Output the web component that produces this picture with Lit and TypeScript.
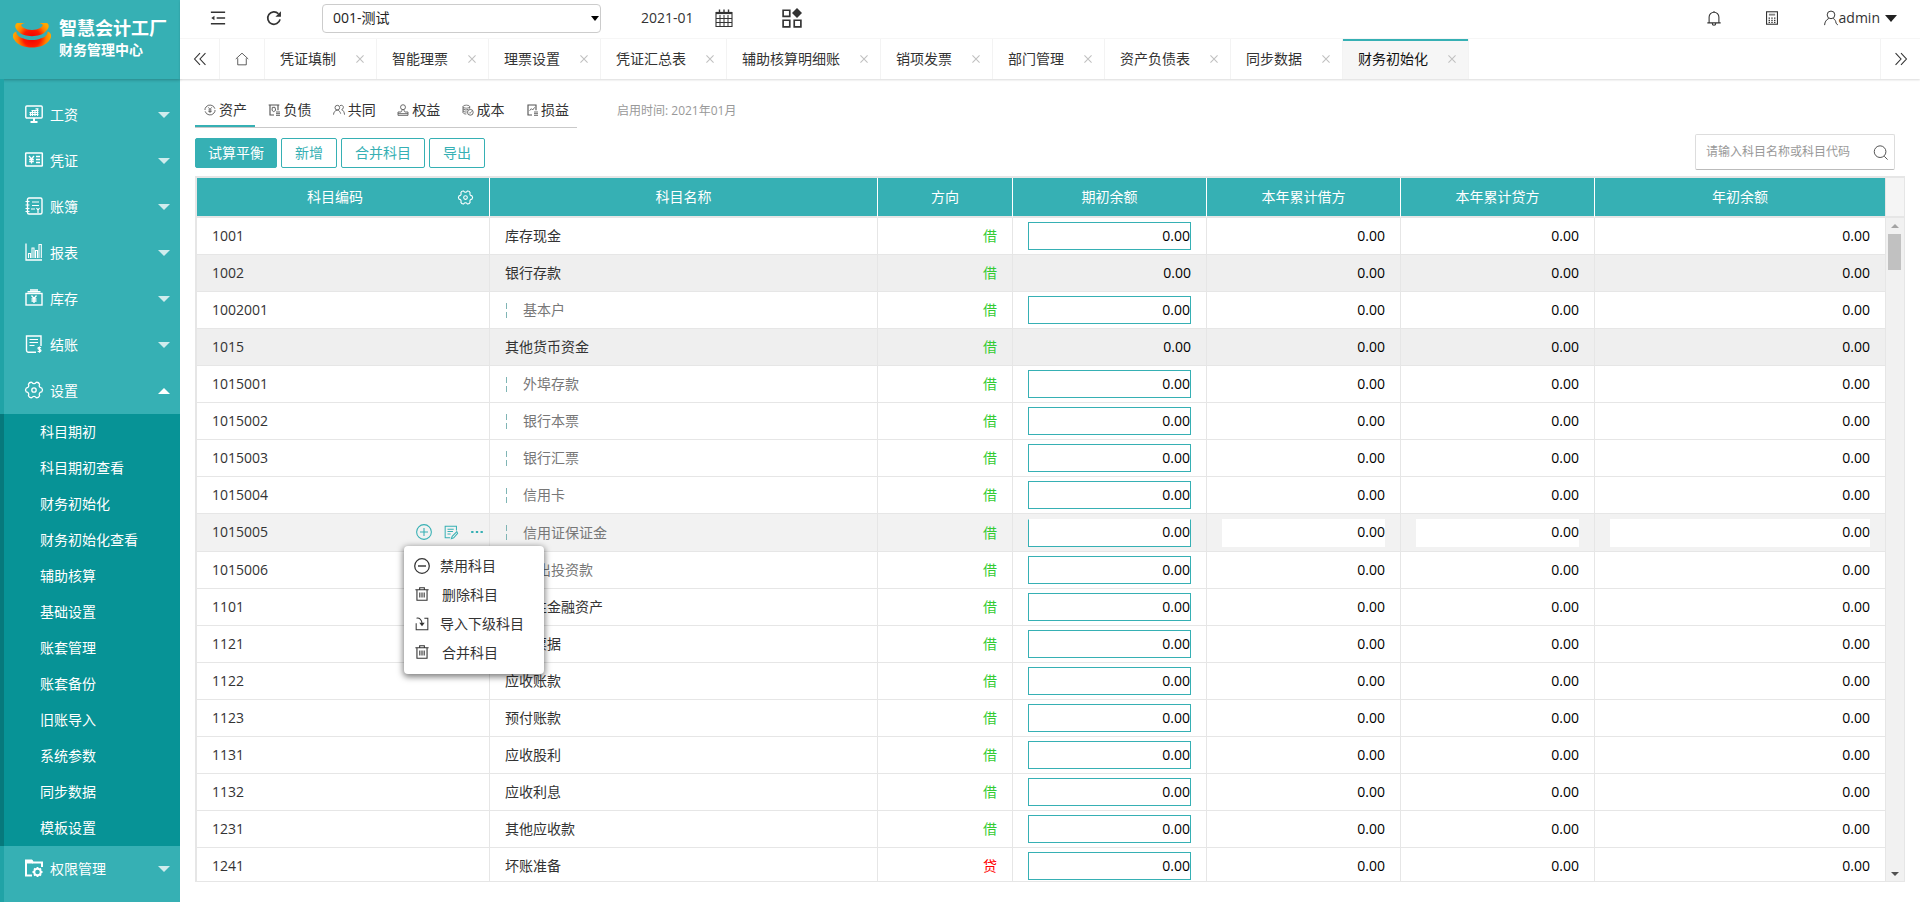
import { LitElement, html, css, svg, nothing, TemplateResult } from "lit";
import { customElement, property } from "lit/decorators.js";
import { classMap } from "lit/directives/class-map.js";

const FONT = css`"Open Sans", "Noto Sans CJK SC", sans-serif`;

/* Outline of a six-lobed cog centred on 9,9. */
function cogOutline(): string {
  const at = (deg: number, r: number) => {
    const a = (deg * Math.PI) / 180;
    return `${(9 + r * Math.cos(a)).toFixed(2)} ${(9 + r * Math.sin(a)).toFixed(2)}`;
  };
  let d = `M${at(-30, 6.4)}`;
  for (let a = 0; a < 360; a += 60) {
    d += `Q${at(a - 20, 6.4)} ${at(a - 14, 8)}Q${at(a, 9.3)} ${at(a + 14, 8)}Q${at(a + 20, 6.4)} ${at(a + 30, 6.4)}`;
  }
  return d + "z";
}

/* Line icons, all on an 18 x 18 grid. */
const ICONS: Record<string, TemplateResult> = {
  salary: svg`<rect x="0.800" y="1" width="16.400" height="12" rx="1" stroke-width="1.400"/><path d="M5.500 17h7M9 13v4" stroke-width="2"/><path d="M4.500 9.500h9M4.500 7.500h9M6.500 5.500h7M10.500 3.800h3M5.500 7v4M7.500 5v6M10 5v6M12.500 3.500v7.500" stroke-width="1.200"/>`,
  voucher: svg`<rect x="0.700" y="2" width="16.600" height="13" rx="0.500" stroke-width="1.500"/><path d="M4 5l2.500 3L9 5M6.500 8v4.500M4.200 8.500h4.600M4.200 10.500h4.600M11 5.500h4M11 8.500h4M11 11.500h4" stroke-width="1.300"/>`,
  book: svg`<rect x="2.500" y="1" width="14.500" height="16" rx="1.500" stroke-width="1.400"/><path d="M0.500 4.500h4M0.500 8h4M0.500 11.500h4M0.500 14.500h4M7 5h7M7 8.500h7M6 12h4M11.500 11l1.500 2 1.500-2M13 13v3" stroke-width="1.200"/>`,
  report: svg`<path d="M1 0.500v16.500h16" stroke-width="1.300"/><path d="M3.500 15V10.500h2V15M7 15V5h2V15M10.500 15V7.500h2V15M14 15V1.500h2.300V15" stroke-width="1.100"/>`,
  stock: svg`<rect x="1" y="4.500" width="16" height="11.500" stroke-width="1.400"/><path d="M2.500 2.700h13M5 1h8" stroke-width="1.500"/><path d="M6.500 6.500L9 9.500l2.500-3M9 9.500v4.500M6.500 10h5M6.500 12h5" stroke-width="1.300"/>`,
  closing: svg`<path d="M11 17.300H3.500a2 2 0 0 1-2-2V1h14.500v10" stroke-width="1.400"/><path d="M4.500 4.500h8.500M4.500 7.500h8.500M4.500 10.500h5M16 12.800c-1-.8-3.200-.6-3 .7s3 .6 3 2-2.500 1.500-3.300.5M14.500 11.500v6.300" stroke-width="1.200"/>`,
  gear: svg`<path d=${cogOutline()} stroke-width="1.300"/><circle cx="9" cy="9" r="2.200" stroke-width="1.300"/>`,
  rights: svg`<path d="M7 16.500H1V1.500h5.500l1.500 2h9V8" stroke-width="2"/><path d="M1 3h7" stroke-width="3"/><circle cx="12.500" cy="13" r="3.300" stroke-width="2"/><path d="M12.500 8v2M12.500 16v2M7.500 13h2M15.500 13h2M9 9.500l1.500 1.500M14.500 15l1.500 1.500M16 9.500l-1.500 1.500M10.500 15l-1.500 1.500" stroke-width="1.800"/>`,
  fold: svg`<path d="M1 2.500h16M7.500 9h9.500M1 15.500h16" stroke-width="1.600"/><path d="M1.500 9l3.500-2.500v5z" fill="currentColor" stroke="none"/>`,
  refresh: svg`<path d="M15.800 10.500a7 7 0 1 1-1.800-6.300" stroke-width="1.900"/><path d="M16.800 1.500v6.200h-6.200z" fill="currentColor" stroke="none"/>`,
  calendar: svg`<path d="M1 3.500h16v14H1z" stroke-width="1.100"/><path d="M1 4h16" stroke-width="2.200"/><path d="M4.500 0.500v4M9 0.500v4M13.500 0.500v4" stroke-width="1.400"/><path d="M5 6v11M9 6v11M13 6v11M1 9.500h16M1 13.500h16" stroke-width="1"/>`,
  apps: svg`<path d="M1 2h6v5.500H1zM1 11h6v6H1zM11 11h6v6h-6z" stroke-width="1.500"/><path d="M13.500 0l4.500 4.500L13.500 9 9 4.500z" fill="currentColor" stroke="none"/>`,
  bell: svg`<path d="M1.500 14.500h15M3.500 14.500V8a5.500 5.500 0 0 1 11 0v6.500M9 2.500V1M7 15c0 3 4 3 4 0" stroke-width="1.200"/>`,
  calc: svg`<rect x="2" y="1" width="14" height="16" stroke-width="1.400"/><path d="M5 4.700h8" stroke-width="2.400" opacity="0.600"/><path d="M5.500 8.500v7M9 8.500v7M12.500 8.500v7" stroke-width="1.800" stroke-dasharray="1.600 1"/>`,
  user: svg`<circle cx="9" cy="5.500" r="4.300"/><path d="M6.500 9.500C3.500 11 2 13.500 1.800 17M11.500 9.500c2 1 3 3 3.200 5.500l2 1.800"/>`,
  home: svg`<path d="M1 9L9 1.500 17 9M3.500 8v8.500h11V8" stroke-width="1"/>`,
  left: svg`<path d="M9 1.500L2 9l7 7.500M16 1.500L9 9l7 7.500" stroke-width="1.400"/>`,
  right: svg`<path d="M9 1.500L16 9l-7 7.500M2 1.500L9 9l-7 7.500" stroke-width="1.400"/>`,
  close: svg`<path d="M1 1l16 16M17 1L1 17" stroke-width="2.400"/>`,
  asset: svg`<path d="M3 4.500A7.600 7.600 0 0 1 16.300 7M15 13.500A7.600 7.600 0 0 1 1.700 11M1.400 9C1.400 7 2 5.500 3 4.500M16.600 9c0 2-.6 3.500-1.600 4.500" stroke-width="1.300"/><path d="M6.500 5L9 8l2.500-3M9 8v5.500M6.500 9h5M6.500 11.300h5" stroke-width="1.200"/>`,
  debt: svg`<path d="M9 16.500H3V1.500h12v8M1 1.500h16" stroke-width="1.700"/><path d="M6.500 5h4l1 4.500-3 2-2.500-2zM12 12h6M12 14.500h6M12 17h6" stroke-width="1.400"/>`,
  common: svg`<circle cx="6.500" cy="5.500" r="3.500" stroke-width="1.300"/><path d="M.8 16c.2-4 2.200-6 5.700-7 3 .8 4.300 3 5 5.500M10.500 2.500c3-1.500 5.500.5 5 3-.2 1.500-1.200 2.500-2.500 3 2.500 1 4 3.500 4.300 7.500" stroke-width="1.300"/>`,
  equity: svg`<circle cx="9" cy="4.800" r="3.700" stroke-width="1.300"/><path d="M7.500 8.500c0 2-.5 3-1.500 3.500H1.500V17h15v-5h-4.500c-1-.5-1.500-1.500-1.500-3.500M1.500 14.500h15" stroke-width="1.300"/>`,
  cost: svg`<ellipse cx="6.500" cy="4" rx="5" ry="2.300"/><path d="M1.500 4v9c1 1.500 3 2 5 2M11.500 4v3M1.500 7c1.500 2 5 2.500 8 1M1.500 10c1.200 1.700 3.500 2.200 5.500 2" stroke-width="1.300"/><circle cx="12.500" cy="12.500" r="4.300" stroke-width="1.300"/><path d="M10.500 12.500l1.500 1.500 2.500-3"/>`,
  profit: svg`<path d="M9 16.500H3V1.500h12v8" stroke-width="1.700"/><path d="M5.500 10l2.500-3 2 2 3-4M12 12h6M12 14.500h6M12 17h6" stroke-width="1.300"/>`,
  search: svg`<circle cx="8.500" cy="8" r="7" stroke-width="1.200"/><path d="M13.500 13.500l4 4" stroke-width="1.200"/>`,
  plus: svg`<circle cx="9" cy="9" r="8.300" stroke-width="1.200"/><path d="M9 4.500v9M4.500 9h9" stroke-width="1.200"/>`,
  edit: svg`<path d="M16 7V1.500H1.500v15H8M4.500 5.500h8M4.500 8.500h7M4.500 11.500h4M16.500 8.500l-6 6-1 3 3-1 5-5.800z" stroke-width="1.300"/>`,
  dots: svg`<path d="M1.500 9h3M7.500 9h3M13.500 9h3" stroke-width="2.400"/>`,
  minus: svg`<circle cx="9" cy="9" r="8.200" stroke-width="1.400"/><path d="M4.500 9h9" stroke-width="1.600"/>`,
  trash: svg`<path d="M0.500 3.500h17M6 3.500V1h6v2.500M2.500 3.500v13.500h13v-13.500M6.200 7v6.500M9 7v6.500M11.800 7v6.500" stroke-width="1.400"/>`,
  import: svg`<path d="M12 1.500h4.500v15H1.500V8M2 1.500c4-.5 7 2 7 7" stroke-width="1.300"/><path d="M5.500 7.500h7L9 12z" fill="currentColor" stroke="none"/>`,
};

@customElement("line-icon")
class LineIcon extends LitElement {
  @property() name = "";
  static styles = css`
    :host { display: inline-flex; width: 18px; height: 18px; flex: none; }
    svg { width: 100%; height: 100%; display: block; overflow: visible; fill: none; stroke: currentColor; stroke-width: 1.1; }
  `;
  render() {
    return html`<svg viewBox="0 0 18 18" aria-hidden="true">${ICONS[this.name]}</svg>`;
  }
}

const MENU = [
  ["salary", "工资"], ["voucher", "凭证"], ["book", "账簿"], ["report", "报表"],
  ["stock", "库存"], ["closing", "结账"], ["gear", "设置"], ["rights", "权限管理"],
];
const SUBMENU = ["科目期初", "科目期初查看", "财务初始化", "财务初始化查看", "辅助核算", "基础设置",
  "账套管理", "账套备份", "旧账导入", "系统参数", "同步数据", "模板设置"];

@customElement("side-nav")
class SideNav extends LitElement {
  static styles = css`
    :host { display: flex; flex-direction: column; background: #36b0b4; color: #fff; font: 14px/20px ${FONT}; }
    .brand { height: 79px; box-sizing: border-box; display: flex; align-items: center; gap: 8px; padding: 0 12px 4px 13px; box-shadow: 0 1px 3px rgba(0, 0, 0, 0.25); }
    .logo { width: 38px; height: 25px; flex: none; margin-bottom: 4px; }
    .brand h1 { margin: 0; font-size: 18px; line-height: 24px; white-space: nowrap; }
    .brand p { margin: 0; font-weight: 700; line-height: 20px; }
    nav { flex: 1; border-left: 4px solid #20a3a6; padding-top: 13px; }
    ul { list-style: none; margin: 0; padding: 0; }
    .item { width: 100%; height: 46px; border: 0; background: none; color: inherit; font: inherit; display: flex; align-items: center; padding: 0 10px 0 21px; gap: 7px; text-align: left; }
    .item span { flex: 1; }
    .caret { border: 6px solid transparent; border-top-color: #cfeced; border-bottom-width: 0; }
    .caret.up { border-top-width: 0; border-bottom: 6px solid #fff; }
    .item line-icon { margin-bottom: 2px; }
    .sub { background: #079396; margin-left: -4px; border-left: 4px solid #06797c; }
    .sub a { display: block; padding: 8px 0 8px 36px; color: #fff; text-decoration: none; }
  `;
  render() {
    return html`
      <header class="brand">
        <svg class="logo" viewBox="0 0 38 25" aria-hidden="true">
          <defs>
            <radialGradient id="flame" gradientUnits="userSpaceOnUse" cx="19" cy="15" r="19">
              <stop offset="0" stop-color="#f00000"/><stop offset="0.45" stop-color="#ff1a00"/><stop offset="0.75" stop-color="#ff8000"/><stop offset="1" stop-color="#ffa800"/>
            </radialGradient>
          </defs>
          <g fill="url(#flame)">
            <path d="M4 0C1 2 2 6 6 9c4 5.500 22 5.500 26 0 4-3 5-7 2-9h-8c5 1 4.500 3 1 5-4 2.500-12 2.500-16 0C7.500 3 7 1 12 0z"/>
            <path d="M3.500 8.500C-1 10-1 14 1.500 17 7 27 31 27 36.500 17 39 14 39 10 34.500 8.500c.5 3-2.500 5.500-7 7-5 2-12 2-17 0C6 14 3 11.500 3.500 8.500z"/>
          </g>
        </svg>
        <div><h1>智慧会计工厂</h1><p>财务管理中心</p></div>
      </header>
      <nav aria-label="主菜单">
        <ul>
          ${MENU.map(([icon, label]) => {
            const open = icon === "gear";
            return html`<li>
              <button class="item" aria-expanded=${open}>
                <line-icon name=${icon}></line-icon><span>${label}</span>
                <i class=${classMap({ caret: true, up: open })}></i>
              </button>
              ${open ? html`<ul class="sub">${SUBMENU.map((s) => html`<li><a href="#">${s}</a></li>`)}</ul>` : nothing}
            </li>`;
          })}
        </ul>
      </nav>`;
  }
}

const TABS = ["凭证填制", "智能理票", "理票设置", "凭证汇总表", "辅助核算明细账", "销项发票", "部门管理", "资产负债表", "同步数据", "财务初始化"];

@customElement("top-bar")
class TopBar extends LitElement {
  static styles = css`
    :host { display: block; background: #fff; box-shadow: 0 1px 2px rgba(0, 0, 0, 0.15); color: #333; font: 14px/20px ${FONT}; position: relative; }
    button { border: 0; background: none; padding: 0; color: inherit; font: inherit; display: inline-flex; align-items: center; }
    .tools { box-sizing: border-box; height: 39px; border-bottom: 1px solid #f6f6f6; display: flex; align-items: center; padding: 0 23px 2px 30px; }
    .tools line-icon { width: 16px; height: 16px; }
    .refresh { margin: 0 40px; }
    .company { position: relative; display: flex; align-items: center; }
    select { appearance: none; width: 279px; height: 29px; border: 1px solid #ccc; border-radius: 4px; background: #fff; padding: 0 20px 0 10px; font: inherit; color: #222; }
    .arrow { position: absolute; right: 2px; border: 4px solid transparent; border-top: 5px solid #000; border-bottom: 0; }
    .period { margin-left: 40px; gap: 21px; }
    .tools .period line-icon { width: 18px; height: 18px; }
    .tools .apps line-icon { width: 20px; height: 20px; }
    .apps { margin-left: 49px; }
    .grow { flex: 1; }
    .bell { margin-right: 43px; }
    .calc { margin-right: 44px; }
    .tools .calc line-icon { width: 14px; height: 14px; }
    .admin i { border: 6px solid transparent; border-top: 7px solid #222; border-bottom: 0; margin-left: 5px; }
    .tabs { height: 40px; display: flex; }
    .tabs line-icon { width: 14px; height: 14px; }
    .prev { width: 39px; justify-content: center; padding-left: 1px; }
    .home { width: 45px; justify-content: center; border-left: 1px solid #f3f3f3; }
    .next { width: 40px; justify-content: center; border-left: 1px solid #f3f3f3; }
    .tab { display: flex; align-items: center; padding: 0 12px 0 15px; gap: 20px; border-right: 1px solid #f3f3f3; white-space: nowrap; }
    .tabs .home + .tab { border-left: 1px solid #f3f3f3; }
    .tab a { color: inherit; text-decoration: none; }
    .tab line-icon { width: 8px; height: 8px; color: #c0c0c0; }
    .tab.on { background: #f6f6f6; box-shadow: inset 0 2px #36b0b4; color: #111; }
  `;
  render() {
    return html`
      <div class="tools">
        <button aria-label="收起菜单"><line-icon name="fold"></line-icon></button>
        <button class="refresh" aria-label="刷新"><line-icon name="refresh"></line-icon></button>
        <div class="company"><select aria-label="账套"><option>001-测试</option></select><i class="arrow"></i></div>
        <button class="period">2021-01<line-icon name="calendar"></line-icon></button>
        <button class="apps" aria-label="应用"><line-icon name="apps"></line-icon></button>
        <span class="grow"></span>
        <button class="bell" aria-label="消息"><line-icon name="bell"></line-icon></button>
        <button class="calc" aria-label="计算器"><line-icon name="calc"></line-icon></button>
        <button class="admin"><line-icon name="user"></line-icon>admin<i></i></button>
      </div>
      <div class="tabs">
        <button class="prev" aria-label="向左"><line-icon name="left"></line-icon></button>
        <button class="home" aria-label="首页"><line-icon name="home"></line-icon></button>
        ${TABS.map((t, i) => html`<div class=${classMap({ tab: true, on: i === TABS.length - 1 })}>
          <a href="#">${t}</a><button aria-label="关闭${t}"><line-icon name="close"></line-icon></button></div>`)}
        <span class="grow"></span>
        <button class="next" aria-label="向右"><line-icon name="right"></line-icon></button>
      </div>`;
  }
}

interface Account { code: string; name: string; credit?: boolean; parent?: boolean; hover?: boolean }
const ROWS: Account[] = [
  { code: "1001", name: "库存现金" },
  { code: "1002", name: "银行存款", parent: true },
  { code: "1002001", name: "基本户" },
  { code: "1015", name: "其他货币资金", parent: true },
  { code: "1015001", name: "外埠存款" },
  { code: "1015002", name: "银行本票" },
  { code: "1015003", name: "银行汇票" },
  { code: "1015004", name: "信用卡" },
  { code: "1015005", name: "信用证保证金", hover: true },
  { code: "1015006", name: "存出投资款" },
  { code: "1101", name: "交易性金融资产" },
  { code: "1121", name: "应收票据" },
  { code: "1122", name: "应收账款" },
  { code: "1123", name: "预付账款" },
  { code: "1131", name: "应收股利" },
  { code: "1132", name: "应收利息" },
  { code: "1231", name: "其他应收款" },
  { code: "1241", name: "坏账准备", credit: true },
];
const TOTALS = ["本年累计借方", "本年累计贷方", "年初余额"];

@customElement("account-table")
class AccountTable extends LitElement {
  static styles = css`
    :host { display: flex; min-height: 0; overflow: hidden; border: 1px solid #e6e6e6; border-width: 2px 1px 1px 2px; font: 14px/20px ${FONT}; color: #333; }
    .view { flex: 1; min-width: 0; overflow: hidden; }
    table { width: 100%; table-layout: fixed; border-collapse: separate; border-spacing: 0; }
    .c-code { width: 293px; } .c-name { width: 388px; } .c-dir { width: 135px; } .c-num { width: 194px; }
    th { height: 38px; padding: 0; background: #36b0b4; color: #fff; font-weight: 400; border-right: 1px solid #fff; border-bottom: 2px solid #e6e6e6; }
    th:last-child { border-right-color: #e6e6e6; }
    .headcell { display: grid; grid-template-columns: 1fr auto 1fr; align-items: center; padding-right: 16px; }
    .headcell button { grid-column: 3; justify-self: end; border: 0; padding: 0; background: none; color: #fff; display: flex; }
    .headcell span { grid-column: 2; }
    .headcell line-icon { width: 15px; height: 15px; }
    td { height: 36px; padding: 0 15px; border-right: 1px solid #e6e6e6; border-bottom: 1px solid #e6e6e6; white-space: nowrap; }
    .num, .dir { text-align: right; }
    .num { color: #000; }
    .dir { color: #3c3; }
    .dir.credit { color: #f00; }
    .parent td { background: #efefef; }
    .hover td { background: #f2f2f2; height: 37px; }
    .child { color: #777; display: flex; align-items: center; gap: 16px; }
    .child::before { content: ""; width: 1px; height: 15px; background: repeating-linear-gradient(#7fb5b5 0 6px, transparent 6px 9px); margin-left: 1px; }
    input { display: block; box-sizing: border-box; width: 100%; height: 28px; border: 1px solid #36b0b4; padding: 0 0 2px; background: #fff; font: inherit; color: #000; text-align: right; }
    .hover input { border-top-color: #fff; }
    .hover input[readonly] { border: 0; }
    .code { display: flex; align-items: center; justify-content: space-between; padding-bottom: 2px; }
    .acts { position: relative; display: flex; align-items: center; gap: 12px; color: #36b0b4; margin-right: -10px; }
    .acts > button, .menu button { border: 0; padding: 0; background: none; color: inherit; font: inherit; display: flex; align-items: center; }
    .acts line-icon { width: 16px; height: 16px; }
    .acts .small, .menu .trash line-icon, .menu .import line-icon { width: 14px; height: 14px; }
    .menu { position: absolute; z-index: 2; top: 22px; left: -12px; width: 140px; box-sizing: border-box; padding: 6px 10px; border-radius: 4px; background: #fff; color: #333; box-shadow: 0 2px 6px 1px rgba(0, 0, 0, 0.5); }
    .menu button { height: 29px; gap: 10px; width: 100%; }
    .menu .trash { gap: 13px; padding-left: 1px; }
    .menu .trash line-icon { margin-bottom: 3px; }
    .menu .import { gap: 11px; padding-left: 1px; }
    .bar { width: 18px; flex: none; display: flex; flex-direction: column; background: #f1f1f1; }
    .filler { height: 38px; background: #f5f5f5; border-bottom: 2px solid #e6e6e6; }
    .track { flex: 1; display: flex; flex-direction: column; align-items: center; padding: 6px 1px 5px 0; }
    .up { border: 4px solid transparent; border-bottom-color: #a3a3a3; border-top: 0; }
    .down { border: 4px solid transparent; border-top-color: #505050; border-bottom: 0; margin-top: auto; }
    .thumb { width: 13px; height: 36px; background: #c1c1c1; margin-top: 6px; }
  `;
  private row(r: Account) {
    return html`<tr class=${classMap({ parent: !!r.parent, hover: !!r.hover })}>
      <td>${r.hover ? html`<div class="code"><span>${r.code}</span>
        <div class="acts">
          <button aria-label="新增"><line-icon name="plus"></line-icon></button>
          <button aria-label="编辑"><line-icon class="small" name="edit"></line-icon></button>
          <button aria-label="更多"><line-icon class="small" name="dots"></line-icon></button>
          <div class="menu">
            <button><line-icon name="minus"></line-icon>禁用科目</button>
            <button class="trash"><line-icon name="trash"></line-icon>删除科目</button>
            <button class="import"><line-icon name="import"></line-icon>导入下级科目</button>
            <button class="trash"><line-icon name="trash"></line-icon>合并科目</button>
          </div>
        </div></div>` : r.code}</td>
      <td><div class=${r.code.length > 4 ? "child" : ""}>${r.name}</div></td>
      <td class=${classMap({ dir: true, credit: !!r.credit })}>${r.credit ? "贷" : "借"}</td>
      <td class="num">${r.parent ? "0.00" : html`<input value="0.00" aria-label="${r.name} 期初余额">`}</td>
      ${TOTALS.map((t) => html`<td class="num">${r.hover ? html`<input readonly value="0.00" aria-label="${r.name} ${t}">` : "0.00"}</td>`)}
    </tr>`;
  }
  render() {
    return html`
      <div class="view">
        <table>
          <colgroup><col class="c-code"><col class="c-name"><col class="c-dir"><col class="c-num"><col class="c-num"><col class="c-num"><col></colgroup>
          <thead><tr>
            <th><div class="headcell"><span>科目编码</span><button aria-label="列设置"><line-icon name="gear"></line-icon></button></div></th>
            <th>科目名称</th><th>方向</th><th>期初余额</th>${TOTALS.map((t) => html`<th>${t}</th>`)}
          </tr></thead>
          <tbody>${ROWS.map((r) => this.row(r))}</tbody>
        </table>
      </div>
      <div class="bar"><div class="filler"></div>
        <div class="track"><i class="up"></i><i class="thumb"></i><i class="down"></i></div>
      </div>`;
  }
}

const KINDS = [["asset", "资产"], ["debt", "负债"], ["common", "共同"], ["equity", "权益"], ["cost", "成本"], ["profit", "损益"]];

@customElement("app-root")
class AppRoot extends LitElement {
  static styles = css`
    :host { display: grid; grid-template-columns: 180px minmax(0, 1fr); height: 100vh; overflow: hidden; background: #fff; font: 14px/20px ${FONT}; color: #333; }
    .page { display: flex; flex-direction: column; min-height: 0; }
    main { flex: 1; min-height: 0; display: flex; flex-direction: column; padding: 16px 15px 20px; }
    .kinds { display: flex; align-items: center; gap: 40px; }
    .kinds nav { display: flex; width: 382px; justify-content: space-between; border-bottom: 1px solid #c9c9c9; }
    .kinds a { width: 60px; box-sizing: border-box; height: 32px; padding: 0 0 2px 9px; display: flex; align-items: center; gap: 3px; color: #333; text-decoration: none; white-space: nowrap; }
    .kinds a.on { box-shadow: inset 0 -2px #36b0b4; }
    .kinds line-icon { width: 12px; height: 12px; color: #555; }
    .since { font-size: 12px; color: #999; padding-bottom: 2px; }
    .actions { display: flex; gap: 4px; align-items: center; padding-top: 6px; margin-bottom: 6px; }
    .actions button { box-sizing: border-box; height: 30px; padding: 0 13px; border: 1px solid #36b0b4; border-radius: 2px; background: #fff; color: #36b0b4; font: inherit; margin-top: 2px; }
    .actions button.solid { background: #36b0b4; color: #fff; padding: 0 12px; }
    .search { margin: 0 10px 0 auto; width: 200px; height: 36px; box-sizing: border-box; border: 1px solid #ddd; border-bottom-color: #bbb; border-radius: 2px; display: flex; align-items: center; padding: 0 6px 0 10px; }
    .search input { flex: 1; min-width: 0; border: 0; outline: 0; padding: 0; background: none; font: 12px/20px ${FONT}; }
    .search input::placeholder { color: #999; opacity: 1; }
    .search line-icon { width: 15px; height: 15px; color: #555; }
    .actions .search button { all: unset; display: flex; }
    account-table { flex: 0 1 auto; min-height: 0; }
  `;
  render() {
    return html`
      <side-nav></side-nav>
      <div class="page">
        <top-bar></top-bar>
        <main>
          <div class="kinds">
            <nav aria-label="科目类别">${KINDS.map(([icon, label], i) => html`<a href="#" class=${i ? "" : "on"}><line-icon name=${icon}></line-icon>${label}</a>`)}</nav>
            <span class="since">启用时间: 2021年01月</span>
          </div>
          <div class="actions">
            <button class="solid">试算平衡</button><button>新增</button><button>合并科目</button><button>导出</button>
            <div class="search"><input placeholder="请输入科目名称或科目代码" aria-label="搜索科目"><button aria-label="搜索"><line-icon name="search"></line-icon></button></div>
          </div>
          <account-table></account-table>
        </main>
      </div>`;
  }
}
